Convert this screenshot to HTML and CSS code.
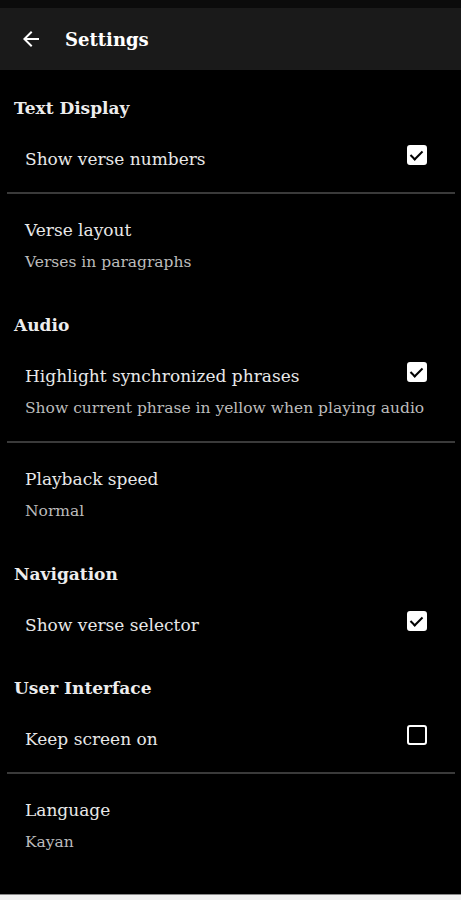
FILE: index.html
```html
<!DOCTYPE html>
<html lang="en">
<head>
    <meta charset="UTF-8">
    <meta name="viewport" content="width=device-width, initial-scale=1.0">
    <title>Settings</title>
    <link rel="stylesheet" href="styles.css">
</head>
<body>
    <div class="status-bar"></div>
    <header class="app-bar">
        <svg class="back-icon" width="24" height="24" viewBox="0 0 24 24">
            <path d="M20 11H7.83l5.59-5.59L12 4l-8 8 8 8 1.41-1.41L7.83 13H20v-2z" fill="#fff"/>
        </svg>
        <h1>Settings</h1>
    </header>

    <main class="settings">
        <div class="section-title">Text Display</div>
        <div class="item">
            <div class="item-title">Show verse numbers</div>
            <span class="checkbox checked"></span>
        </div>
        <div class="divider"></div>
        <div class="item">
            <div class="item-title">Verse layout</div>
            <div class="item-sub">Verses in paragraphs</div>
        </div>

        <div class="section-title">Audio</div>
        <div class="item">
            <div class="item-title">Highlight synchronized phrases</div>
            <span class="checkbox checked"></span>
            <div class="item-sub">Show current phrase in yellow when playing audio</div>
        </div>
        <div class="divider"></div>
        <div class="item">
            <div class="item-title">Playback speed</div>
            <div class="item-sub">Normal</div>
        </div>

        <div class="section-title">Navigation</div>
        <div class="item">
            <div class="item-title">Show verse selector</div>
            <span class="checkbox checked"></span>
        </div>

        <div class="section-title">User Interface</div>
        <div class="item">
            <div class="item-title">Keep screen on</div>
            <span class="checkbox"></span>
        </div>
        <div class="divider"></div>
        <div class="item">
            <div class="item-title">Language</div>
            <div class="item-sub">Kayan</div>
        </div>
    </main>

    <div class="nav-bar"></div>
</body>
</html>
```

FILE: styles.css
```css
body {
    margin: 0;
    padding: 0;
    background: #000;
    color: #e6e6e6;
    font-family: "DejaVu Serif", "Liberation Serif", serif;
    height: 900px;
    display: flex;
    flex-direction: column;
    overflow: hidden;
}
.status-bar {
    flex-shrink: 0;
    height: 8px;
    background: #0b0b0b;
}
.app-bar {
    flex-shrink: 0;
    height: 62px;
    background: #1a1a1a;
    display: flex;
    align-items: center;
    padding-left: 19px;
}
.back-icon {
    margin-right: 22px;
}
.app-bar h1 {
    margin: 0;
    font-size: 18px;
    font-weight: bold;
    color: #fff;
}
.settings {
    flex: 1;
    min-height: 0;
    padding-top: 8px;
}
.section-title {
    padding: 15px 14px 0;
    line-height: 30px;
    font-size: 17px;
    font-weight: bold;
    color: #ededed;
}
.item {
    display: grid;
    grid-template-columns: 1fr auto;
    align-items: start;
    padding: 20px 34px 17px 25px;
}
.item-title {
    font-size: 17px;
    line-height: 32px;
    color: #e8e8e8;
}
.item-sub {
    grid-column: 1 / -1;
    font-size: 15.5px;
    line-height: 32px;
    color: #bcbcbc;
    white-space: nowrap;
}
.checkbox {
    width: 16px;
    height: 16px;
    margin-top: 2px;
    border: 2px solid #fff;
    border-radius: 3px;
    position: relative;
}
.checkbox.checked {
    background: #fff;
}
.checkbox.checked::after {
    content: "";
    position: absolute;
    left: 4px;
    top: 1px;
    width: 5px;
    height: 10px;
    border: solid #000;
    border-width: 0 2px 2px 0;
    transform: rotate(45deg);
}
.divider {
    height: 2px;
    margin: 0 6px 0 7px;
    background: #3a3a3a;
}
.nav-bar {
    flex-shrink: 0;
    height: 5px;
    border-top: 1px solid #8a8a8a;
    background: #f2f2f2;
}
```
